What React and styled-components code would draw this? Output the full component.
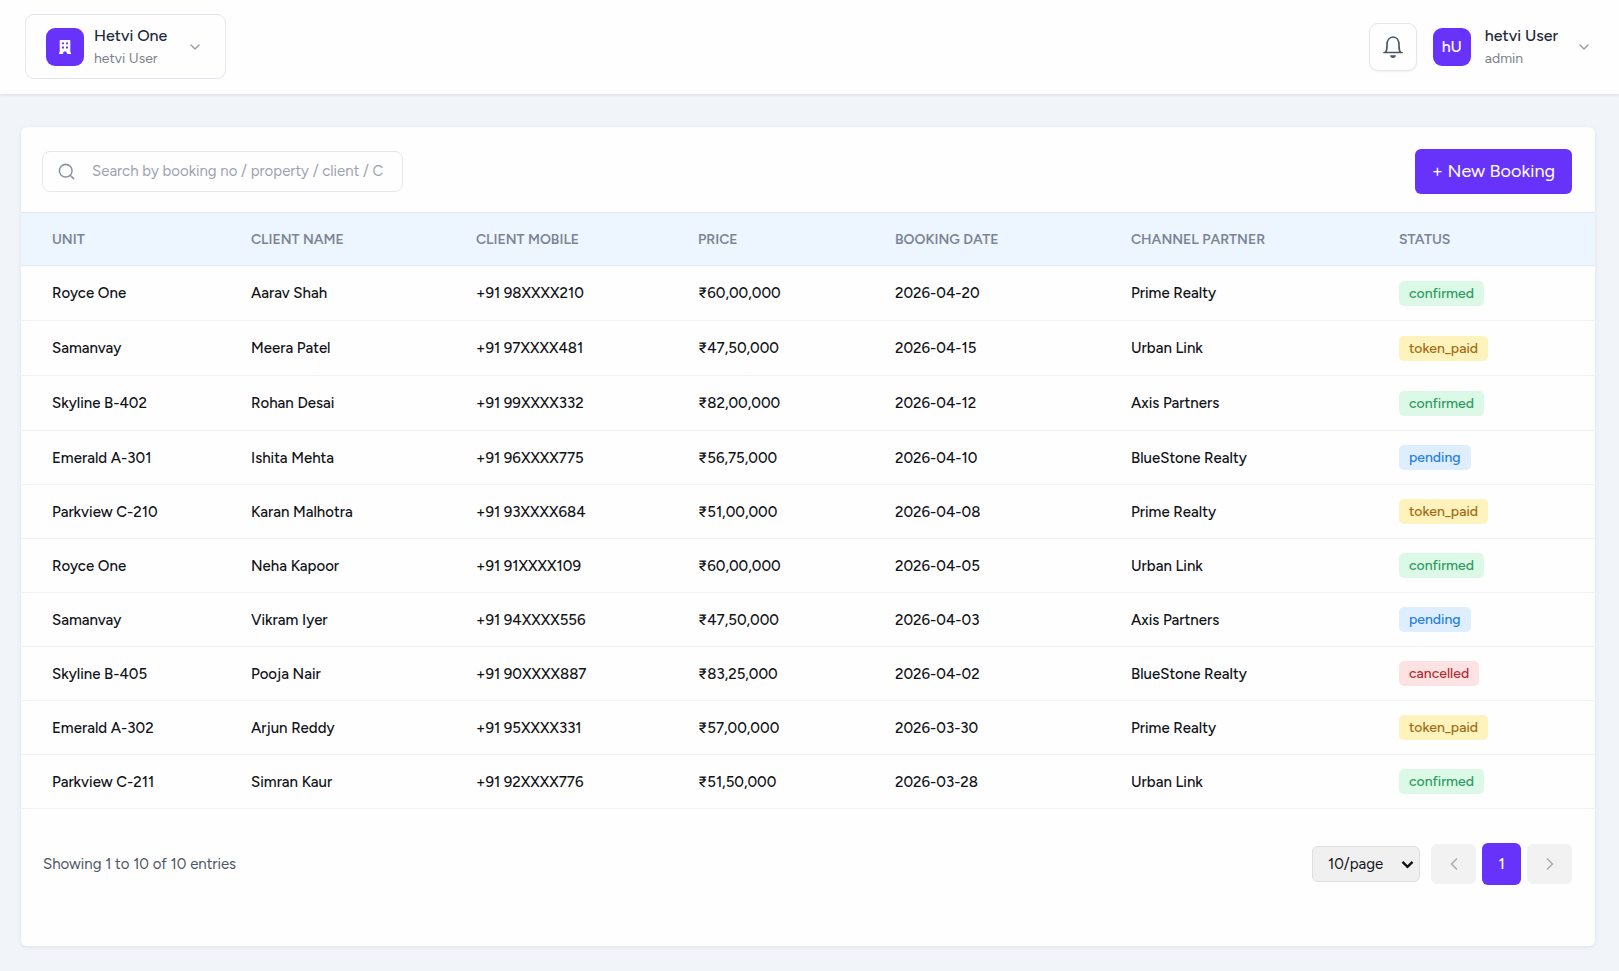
import React, { useState } from 'react';
import styled, { createGlobalStyle } from 'styled-components';
import { ChevronDown, ChevronLeft, ChevronRight, Search } from 'lucide-react';

const GlobalStyle = createGlobalStyle`
    * {
        box-sizing: border-box;
    }
    body {
        margin: 0;
        background: #f1f5f9;
        color: #111318;
        font-family: Figtree, Inter, "Noto Sans", sans-serif;
        font-size: 15px;
    }
    button, input, select {
        font: inherit;
        color: inherit;
    }
    button {
        cursor: pointer;
    }
`
const Page = styled.div`
    display: flex;
    flex-direction: column;
    min-height: 100vh;
`
const Header = styled.header`
    display: flex;
    align-items: center;
    justify-content: space-between;
    height: 94px;
    padding: 0 27px 1px 25px;
    background: #fefefe;
    box-shadow: 0 1px 3px rgba(15, 23, 42, 0.1);
`
const CompanyButton = styled.button`
    display: flex;
    align-items: center;
    gap: 10px;
    width: 201px;
    height: 65px;
    padding: 0 20px;
    background: #fefefe;
    border: 1px solid #e2e6ee;
    border-radius: 9px;
    text-align: left;
`
const Tile = styled.span`
    display: flex;
    align-items: center;
    justify-content: center;
    flex: none;
    width: 38px;
    height: 38px;
    background: #6733fb;
    border-radius: 9px;
    color: #fff;
    font-size: 16px;
    font-weight: 500;
`
const Names = styled.span`
    display: flex;
    flex-direction: column;
    gap: 2px;
`
const Name = styled.span`
    color: #1f2937;
    font-size: 16px;
    font-weight: 500;
    line-height: 22px;
    white-space: nowrap;
`
const Role = styled.span`
    color: #7b818c;
    font-size: 14px;
    line-height: 20px;
`
const HeaderRight = styled.div`
    display: flex;
    align-items: center;
    gap: 16px;
`
const BellButton = styled.button`
    display: flex;
    align-items: center;
    justify-content: center;
    width: 48px;
    height: 48px;
    padding: 0;
    background: #fefefe;
    border: 1px solid #e5e7eb;
    border-radius: 9px;
    box-shadow: 0 1px 2px rgba(15, 23, 42, 0.06);
    color: #4b5563;
`
const UserButton = styled.button`
    display: flex;
    align-items: center;
    gap: 14px;
    padding: 0;
    background: none;
    border: 0;
    text-align: left;
`
const Chevron = styled(ChevronDown)`
    margin-left: 4px;
    color: #9299a6;

    ${CompanyButton} & {
        margin-left: 10px;
    }
`
const Main = styled.main`
    display: flex;
    flex: 1;
    padding: 33px 24px 25px 21px;
`
const Card = styled.section`
    flex: 1;
    background: #fefefe;
    border-radius: 6px;
    box-shadow: 0 1px 4px rgba(15, 23, 42, 0.08);
`
const Toolbar = styled.div`
    display: flex;
    align-items: center;
    justify-content: space-between;
    height: 85px;
    padding: 3px 23px 0 21px;
`
const SearchBox = styled.label`
    display: flex;
    align-items: center;
    gap: 16px;
    width: 361px;
    height: 41px;
    padding: 0 18px 0 14px;
    border: 1px solid #e5e7eb;
    border-radius: 8px;
    color: #8b93a1;
`
const SearchInput = styled.input`
    flex: 1;
    min-width: 0;
    padding: 0;
    background: none;
    border: 0;
    outline: 0;
    color: #111318;

    &::placeholder {
        color: #9ca3af;
    }
`
const NewButton = styled.button`
    height: 45px;
    padding: 0 17px;
    background: #6733fb;
    border: 0;
    border-radius: 6px;
    color: #fff;
    font-size: 18px;
`
const Table = styled.table`
    width: 100%;
    table-layout: fixed;
    border-collapse: separate;
    border-spacing: 0;
`
const Th = styled.th`
    height: 54px;
    padding: 0 0 0 31px;
    background: #edf5fe;
    border-top: 1px solid #deebf7;
    border-bottom: 1px solid #e3ebf3;
    color: #7b8494;
    font-size: 14px;
    font-weight: 600;
    text-align: left;
    text-transform: uppercase;
`
const Row = styled.tr`
    height: 54px;

    &:nth-child(-n + 3) {
        height: 55px;
    }
`
const Td = styled.td`
    padding: 0 0 0 31px;
    border-bottom: 1px solid #f0f1f3;
    font-weight: 500;
    white-space: nowrap;
`
const statusColors = {
    confirmed: { bg: '#dcf8e6', text: '#2c9a60' },
    token_paid: { bg: '#fef2bd', text: '#a16a10' },
    pending: { bg: '#dfeefe', text: '#2080dc' },
    cancelled: { bg: '#fde2e3', text: '#b42a30' },
};
const Badge = styled.span`
    display: inline-block;
    padding: 0 10px;
    background: ${({ $status }) => statusColors[$status].bg};
    border-radius: 5px;
    color: ${({ $status }) => statusColors[$status].text};
    font-size: 14px;
    font-weight: 500;
    line-height: 25px;
    vertical-align: middle;
`
const Footer = styled.footer`
    display: flex;
    align-items: center;
    justify-content: space-between;
    padding: 34px 23px 0 22px;
    color: #4b5563;
`
const Pager = styled.nav`
    display: flex;
    align-items: center;
    gap: 6px;
`
const SelectBox = styled.div`
    display: grid;
    align-items: center;
    margin-right: 5px;
    color: #111318;

    & > * {
        grid-area: 1 / 1;
    }
    & > svg {
        justify-self: end;
        margin-right: 6px;
        pointer-events: none;
    }
`
const PageSize = styled.select`
    appearance: none;
    width: 108px;
    height: 36px;
    padding: 0 24px 0 15px;
    background: #f0f0f0;
    border: 1px solid #dedede;
    border-radius: 6px;
`
const PageButton = styled.button`
    display: flex;
    align-items: center;
    justify-content: center;
    width: ${({ $active }) => ($active ? 39 : 45)}px;
    height: ${({ $active }) => ($active ? 42 : 40)}px;
    padding: 0;
    background: ${({ $active }) => ($active ? '#6733fb' : '#f2f2f2')};
    border: 0;
    border-radius: 6px;
    color: ${({ $active }) => ($active ? '#fff' : '#a9adb5')};
    font-weight: 500;
`

const columns = [
    { title: 'Unit', width: 199 },
    { title: 'Client Name', width: 225 },
    { title: 'Client Mobile', width: 222 },
    { title: 'Price', width: 197 },
    { title: 'Booking Date', width: 236 },
    { title: 'Channel Partner', width: 268 },
    { title: 'Status', width: 227 },
];

const bookings = [
    ['Royce One', 'Aarav Shah', '+91 98XXXX210', '₹60,00,000', '2026-04-20', 'Prime Realty', 'confirmed'],
    ['Samanvay', 'Meera Patel', '+91 97XXXX481', '₹47,50,000', '2026-04-15', 'Urban Link', 'token_paid'],
    ['Skyline B-402', 'Rohan Desai', '+91 99XXXX332', '₹82,00,000', '2026-04-12', 'Axis Partners', 'confirmed'],
    ['Emerald A-301', 'Ishita Mehta', '+91 96XXXX775', '₹56,75,000', '2026-04-10', 'BlueStone Realty', 'pending'],
    ['Parkview C-210', 'Karan Malhotra', '+91 93XXXX684', '₹51,00,000', '2026-04-08', 'Prime Realty', 'token_paid'],
    ['Royce One', 'Neha Kapoor', '+91 91XXXX109', '₹60,00,000', '2026-04-05', 'Urban Link', 'confirmed'],
    ['Samanvay', 'Vikram Iyer', '+91 94XXXX556', '₹47,50,000', '2026-04-03', 'Axis Partners', 'pending'],
    ['Skyline B-405', 'Pooja Nair', '+91 90XXXX887', '₹83,25,000', '2026-04-02', 'BlueStone Realty', 'cancelled'],
    ['Emerald A-302', 'Arjun Reddy', '+91 95XXXX331', '₹57,00,000', '2026-03-30', 'Prime Realty', 'token_paid'],
    ['Parkview C-211', 'Simran Kaur', '+91 92XXXX776', '₹51,50,000', '2026-03-28', 'Urban Link', 'confirmed'],
];

const BuildingIcon = () => (
    <svg width="12" height="14" viewBox="0 0 12 14" aria-hidden="true">
        <path
            fill="currentColor"
            fillRule="evenodd"
            d="M1.5 0h9a.8.8 0 0 1 .8.8v11.6h.7V14H8.2l-1-2.6H4.8l-1 2.6H0v-1.6h.7V.8A.8.8 0 0 1 1.5 0zM3 2.4v1.8h2V2.4zm4 0v1.8h2V2.4zM3 6.6v1.8h2V6.6zm4 0v1.8h2V6.6z"
        />
    </svg>
)

const BellIcon = () => (
    <svg width="22" height="24" viewBox="0 0 22 24" fill="none" stroke="currentColor" strokeWidth="1.7" aria-hidden="true">
        <path d="M2 17.5h18M3.6 17.3c1.3-1.6 1.4-3.8 1.4-7.3C5 5.2 7.4 2 11 2s6 3.2 6 8c0 3.5.1 5.7 1.4 7.3" strokeLinecap="round" strokeLinejoin="round" />
        <path d="M8.2 20.3h5.6a2.8 2.6 0 0 1-5.6 0z" fill="currentColor" stroke="none" />
    </svg>
)

const App = () => {
    const [query, setQuery] = useState('');
    const [pageSize, setPageSize] = useState('10');

    const rows = bookings.filter(row => row.join(' ').toLowerCase().includes(query.toLowerCase()));

    return (
        <Page>
            <GlobalStyle />
            <Header>
                <CompanyButton type="button">
                    <Tile><BuildingIcon /></Tile>
                    <Names>
                        <Name>Hetvi One</Name>
                        <Role>hetvi User</Role>
                    </Names>
                    <Chevron size={16} />
                </CompanyButton>
                <HeaderRight>
                    <BellButton type="button" aria-label="Notifications"><BellIcon /></BellButton>
                    <UserButton type="button">
                        <Tile>hU</Tile>
                        <Names>
                            <Name>hetvi User</Name>
                            <Role>admin</Role>
                        </Names>
                        <Chevron size={16} />
                    </UserButton>
                </HeaderRight>
            </Header>
            <Main>
                <Card>
                    <Toolbar>
                        <SearchBox>
                            <Search size={19} />
                            <SearchInput
                                aria-label="Search bookings"
                                placeholder="Search by booking no / property / client / C"
                                value={query}
                                onChange={e => setQuery(e.target.value)}
                            />
                        </SearchBox>
                        <NewButton type="button">+ New Booking</NewButton>
                    </Toolbar>
                    <Table>
                        <colgroup>
                            {columns.map(col => <col key={col.title} width={col.width} />)}
                        </colgroup>
                        <thead>
                            <tr>
                                {columns.map(col => <Th key={col.title} scope="col">{col.title}</Th>)}
                            </tr>
                        </thead>
                        <tbody>
                            {rows.map(([unit, client, mobile, price, date, partner, status]) => (
                                <Row key={mobile}>
                                    <Td>{unit}</Td>
                                    <Td>{client}</Td>
                                    <Td>{mobile}</Td>
                                    <Td>{price}</Td>
                                    <Td>{date}</Td>
                                    <Td>{partner}</Td>
                                    <Td><Badge $status={status}>{status}</Badge></Td>
                                </Row>
                            ))}
                        </tbody>
                    </Table>
                    <Footer>
                        <span>Showing 1 to {rows.length} of {rows.length} entries</span>
                        <Pager aria-label="Pagination">
                            <SelectBox>
                                <PageSize aria-label="Entries per page" value={pageSize} onChange={e => setPageSize(e.target.value)}>
                                    <option value="10">10/page</option>
                                    <option value="25">25/page</option>
                                    <option value="50">50/page</option>
                                </PageSize>
                                <svg width="13" height="9" viewBox="0 0 13 9" fill="none" stroke="currentColor" strokeWidth="2.4" aria-hidden="true">
                                    <path d="M1.5 1.8l5 5 5-5" />
                                </svg>
                            </SelectBox>
                            <PageButton type="button" aria-label="Previous page"><ChevronLeft size={20} /></PageButton>
                            <PageButton type="button" $active>1</PageButton>
                            <PageButton type="button" aria-label="Next page"><ChevronRight size={20} /></PageButton>
                        </Pager>
                    </Footer>
                </Card>
            </Main>
        </Page>
    );
}

export default App;
